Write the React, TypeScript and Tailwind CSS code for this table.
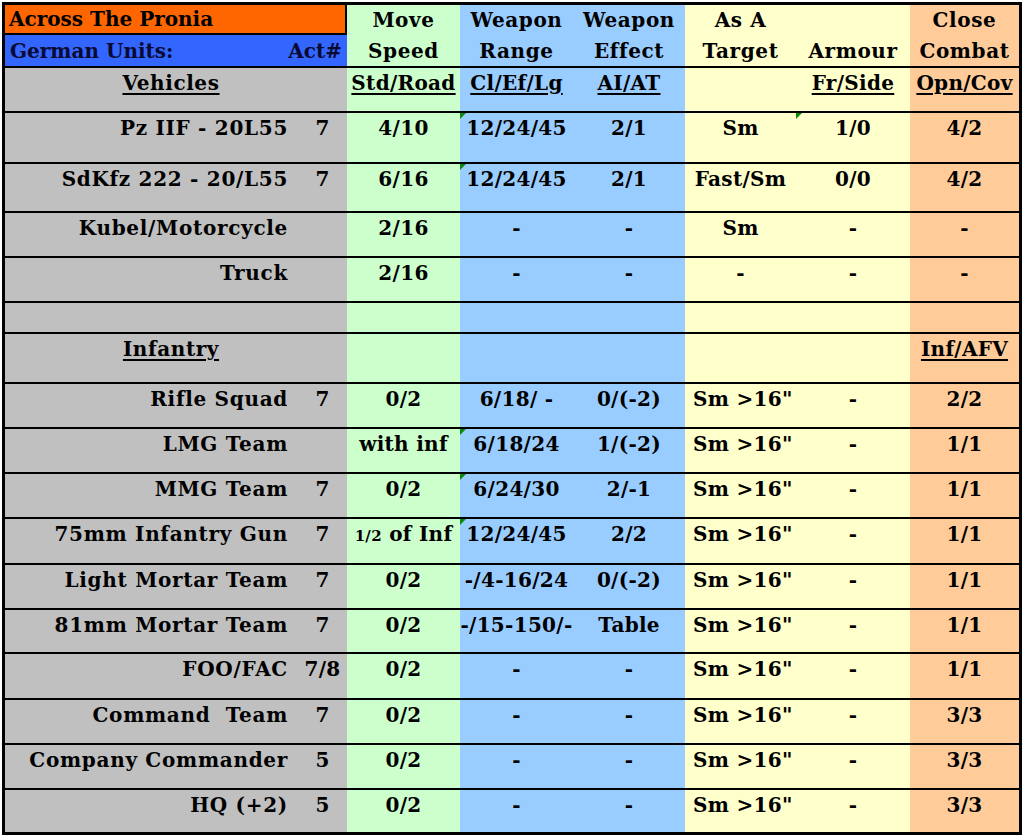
import React from "react";

const FONT = { fontFamily: "'DejaVu Serif', 'Liberation Serif', serif" };

const colBg = [
  "bg-[#c0c0c0]",
  "bg-[#c0c0c0]",
  "bg-[#ccffcc]",
  "bg-[#99ccff]",
  "bg-[#99ccff]",
  "bg-[#ffffcc]",
  "bg-[#ffffcc]",
  "bg-[#ffcc99]",
];

type RowData = {
  name: React.ReactNode;
  act?: string;
  cells: React.ReactNode[];
  h: number;
  last?: boolean;
  tri?: number[];
  leftTarget?: boolean;
};

function Tri() {
  return (
    <div className="absolute left-0 top-0 h-0 w-0 border-t-[6px] border-r-[6px] border-t-[#0a8a0a] border-r-transparent" />
  );
}

function U({ children }: { children: React.ReactNode }) {
  return (
    <span className="underline decoration-2 underline-offset-[3px]">{children}</span>
  );
}

function Row({ r }: { r: RowData }) {
  const b = r.last ? "" : "border-b-2 border-black";
  return (
    <>
      <div
        className={`${colBg[0]} ${b} relative flex justify-end pr-[10px] pt-[4px] whitespace-pre tracking-[0.7px]`}
        style={{ height: r.h }}
      >
        {r.name}
      </div>
      <div className={`${colBg[1]} ${b} flex justify-center pt-[4px]`} style={{ height: r.h }}>
        {r.act ?? ""}
      </div>
      {r.cells.map((c, i) => {
        const idx = i + 2;
        const left = r.leftTarget && idx === 5;
        return (
          <div
            key={i}
            className={`${colBg[idx]} ${b} relative flex ${left ? "justify-start pl-[8px]" : "justify-center"} pt-[4px] whitespace-nowrap`}
            style={{ height: r.h }}
          >
            {r.tri && r.tri.includes(idx) ? <Tri /> : null}
            {c}
          </div>
        );
      })}
    </>
  );
}

export default function App() {
  const rows: RowData[] = [
    {
      name: "",
      cells: [<U>Std/Road</U>, <U>Cl/Ef/Lg</U>, <U>AI/AT</U>, "", <U>Fr/Side</U>, <U>Opn/Cov</U>],
      h: 45,
    },
    { name: "Pz IIF - 20L55", act: "7", cells: ["4/10", "12/24/45", "2/1", "Sm", "1/0", "4/2"], h: 51, tri: [3, 6] },
    { name: "SdKfz 222 - 20/L55", act: "7", cells: ["6/16", "12/24/45", "2/1", "Fast/Sm", "0/0", "4/2"], h: 49, tri: [3] },
    { name: "Kubel/Motorcycle", cells: ["2/16", "-", "-", "Sm", "-", "-"], h: 45 },
    { name: "Truck", cells: ["2/16", "-", "-", "-", "-", "-"], h: 45 },
    { name: "", cells: ["", "", "", "", "", ""], h: 31 },
    { name: "", cells: ["", "", "", "", "", <U>Inf/AFV</U>], h: 50 },
    { name: "Rifle Squad", act: "7", cells: ["0/2", "6/18/ -", "0/(-2)", 'Sm >16"', "-", "2/2"], h: 45, leftTarget: true },
    { name: "LMG Team", cells: ["with inf", "6/18/24", "1/(-2)", 'Sm >16"', "-", "1/1"], h: 45, leftTarget: true, tri: [3] },
    { name: "MMG Team", act: "7", cells: ["0/2", "6/24/30", "2/-1", 'Sm >16"', "-", "1/1"], h: 45, leftTarget: true, tri: [3] },
    {
      name: "75mm Infantry Gun",
      act: "7",
      cells: [
        <span>
          <span className="text-[15px]">1/2</span> of Inf
        </span>,
        "12/24/45",
        "2/2",
        'Sm >16"',
        "-",
        "1/1",
      ],
      h: 46,
      leftTarget: true,
      tri: [3],
    },
    { name: "Light Mortar Team", act: "7", cells: ["0/2", "-/4-16/24", "0/(-2)", 'Sm >16"', "-", "1/1"], h: 45, leftTarget: true },
    { name: "81mm Mortar Team", act: "7", cells: ["0/2", "-/15-150/-", "Table", 'Sm >16"', "-", "1/1"], h: 44, leftTarget: true },
    { name: "FOO/FAC", act: "7/8", cells: ["0/2", "-", "-", 'Sm >16"', "-", "1/1"], h: 46, leftTarget: true },
    { name: "Command  Team", act: "7", cells: ["0/2", "-", "-", 'Sm >16"', "-", "3/3"], h: 45, leftTarget: true },
    { name: "Company Commander", act: "5", cells: ["0/2", "-", "-", 'Sm >16"', "-", "3/3"], h: 45, leftTarget: true },
    { name: "HQ (+2)", act: "5", cells: ["0/2", "-", "-", 'Sm >16"', "-", "3/3"], h: 42, last: true, leftTarget: true },
  ];

  const headTop = ["Move", "Weapon", "Weapon", "As A", "", "Close"];
  const headBot = ["Speed", "Range", "Effect", "Target", "Armour", "Combat"];

  return (
    <div className="min-h-screen w-full bg-white pl-[2px] pt-[2px]">
      <div
        className="w-[1020px] border-[3px] border-black text-[20px] font-bold leading-[22px] tracking-[0.3px] text-black"
        style={FONT}
      >
        <div className="grid grid-cols-[293px_49px_113px_113px_112px_111px_114px_109px]">
          {/* Title row */}
          <div className="col-span-2 flex h-[30px] items-center border-r-2 border-b-2 border-black bg-[#ff6600] pl-[4px] tracking-[0px]">
            Across The Pronia
          </div>
          {headTop.map((t, i) => (
            <div key={i} className={`${colBg[i + 2]} flex h-[30px] items-center justify-center tracking-[0.6px]`}>
              {t}
            </div>
          ))}
          {/* Second header row */}
          <div className="col-span-2 flex h-[33px] items-center justify-between border-b-2 border-black bg-[#3366ff] pl-[5px] pr-[5px] text-[#0a0a33] tracking-[0px]">
            <span>German Units:</span>
            <span>Act#</span>
          </div>
          {headBot.map((t, i) => (
            <div key={i} className={`${colBg[i + 2]} flex h-[33px] items-center justify-center border-b-2 border-black tracking-[0.6px]`}>
              {t}
            </div>
          ))}

          {rows.map((r, i) => {
            if (i === 0 || i === 6) {
              const label = i === 0 ? "Vehicles" : "Infantry";
              return (
                <React.Fragment key={i}>
                  <div
                    className="col-span-2 flex justify-center border-b-2 border-black bg-[#c0c0c0] pr-[10px] pt-[4px] tracking-[0.6px]"
                    style={{ height: r.h }}
                  >
                    <U>{label}</U>
                  </div>
                  {r.cells.map((c, j) => (
                    <div
                      key={j}
                      className={`${colBg[j + 2]} flex justify-center border-b-2 border-black pt-[4px]`}
                      style={{ height: r.h }}
                    >
                      {c}
                    </div>
                  ))}
                </React.Fragment>
              );
            }
            return <Row key={i} r={r} />;
          })}
        </div>
      </div>
    </div>
  );
}
